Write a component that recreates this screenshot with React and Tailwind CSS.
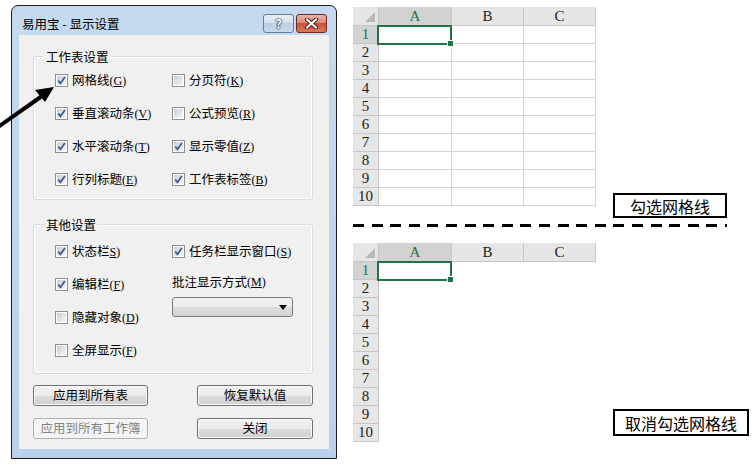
import React from "react";

function Check({ on }) {
  return (
    <span className="flex h-[13px] w-[13px] shrink-0 items-center justify-center border border-[#8e8f8f] bg-white">
      <span className="relative flex h-[9px] w-[9px] items-center justify-center bg-gradient-to-br from-[#c9ced6] to-[#f7f7f7]">
        {on && (
          <svg width="11" height="11" viewBox="0 0 11 11" className="absolute">
            <path d="M2.3 5.6 L4.5 8.3 L8.9 2" fill="none" stroke="#3e5897" strokeWidth="1.7" />
          </svg>
        )}
      </span>
    </span>
  );
}

function Key({ k, noParen }) {
  return (
    <span className="font-['Liberation_Serif',serif] text-[12px]">
      {noParen ? "" : "("}
      <span className="underline">{k}</span>)
    </span>
  );
}

function Opt({ on, label, k, noParen }) {
  return (
    <div className="flex h-[33px] items-center gap-[4px]">
      <Check on={on} />
      <span className="text-[12.5px] leading-none text-black whitespace-nowrap">
        {label}
        <Key k={k} noParen={noParen} />
      </span>
    </div>
  );
}

function Btn({ children, disabled, wide }) {
  const w = wide ? "w-[116px]" : "w-[115px]";
  const look = disabled
    ? "border-[#adb2b5] bg-[#f4f4f4] text-[#838383]"
    : "border-[#707070] bg-[linear-gradient(#f2f2f2_0%,#ebebeb_50%,#dddddd_50%,#cfcfcf_100%)] text-black shadow-[inset_0_0_0_1px_#fbfbfb]";
  return (
    <div className={`${w} ${look} flex h-[21px] items-center justify-center rounded-[3px] border text-[12.5px] leading-none`}>
      {children}
    </div>
  );
}

function Group({ title, children, h, mt, pt }) {
  return (
    <div className={`relative w-[280px] rounded-[3px] border border-[#d5dfe5] shadow-[inset_0_0_0_1px_#ffffff] ${h} ${mt} ${pt}`}>
      <span className="absolute -top-[8px] left-[10px] bg-[#f0f0f0] px-[2px] text-[12.5px] leading-[15px] text-black">
        {title}
      </span>
      {children}
    </div>
  );
}

function Dialog() {
  return (
    <div className="ml-[11px] mt-[5px] flex h-[454px] w-[326px] shrink-0 flex-col rounded-t-[7px] border border-[#1b1b1b] bg-gradient-to-b from-[#c6daef] to-[#b9d1ea] px-[7px] pb-[9px]">
      <div className="flex h-[29px] items-end justify-between pb-[2px]">
        <span className="mb-[1px] pl-[3px] text-[12.5px] leading-[17px] text-black">易用宝 - 显示设置</span>
        <div className="mr-[2px] flex gap-[2px]">
          <div className="flex h-[19px] w-[31px] items-center justify-center rounded-[3px] border border-[#6c7e96] bg-[linear-gradient(#e8eff7_0%,#d3e0ee_45%,#bccee3_50%,#c9d9ea_100%)] text-[13px] font-bold leading-none text-white [text-shadow:0_0_1px_#1e2e44,0_0_1px_#1e2e44,0_0_2px_#1e2e44]">
            ?
          </div>
          <div className="flex h-[19px] w-[31px] items-center justify-center rounded-[3px] border border-[#6e2a1f] bg-[linear-gradient(#eab3a7_0%,#dc8a78_45%,#c9533a_50%,#d47a5c_100%)]">
            <svg width="15" height="11" viewBox="0 0 15 11">
              <path d="M3 1.5 L12 9.5 M12 1.5 L3 9.5" stroke="#4b1a12" strokeWidth="4.2" strokeLinecap="round" />
              <path d="M3 1.5 L12 9.5 M12 1.5 L3 9.5" stroke="#ffffff" strokeWidth="2.2" strokeLinecap="round" />
            </svg>
          </div>
        </div>
      </div>
      <div className="flex flex-1 flex-col bg-[#f0f0f0] pl-[14px]">
        <Group title="工作表设置" h="h-[144px]" mt="mt-[21px]" pt="pt-[7px]">
          <div className="flex pl-[21px]">
            <div className="flex w-[117px] flex-col">
              <Opt on label="网格线" k="G" />
              <Opt on label="垂直滚动条" k="V" />
              <Opt on label="水平滚动条" k="T" />
              <Opt on label="行列标题" k="E" />
            </div>
            <div className="flex flex-col">
              <Opt label="分页符" k="K" />
              <Opt label="公式预览" k="R" />
              <Opt on label="显示零值" k="Z" />
              <Opt on label="工作表标签" k="B" />
            </div>
          </div>
        </Group>
        <Group title="其他设置" h="h-[150px]" mt="mt-[24px]" pt="pt-[10px]">
          <div className="flex pl-[21px]">
            <div className="flex w-[117px] flex-col">
              <Opt on label="状态栏" k="S" noParen />
              <Opt on label="编辑栏" k="F" />
              <Opt label="隐藏对象" k="D" />
              <Opt label="全屏显示" k="F" />
            </div>
            <div className="flex flex-col">
              <Opt on label="任务栏显示窗口" k="S" />
              <div className="flex h-[28px] items-center text-[12.5px] leading-none text-black">
                批注显示方式
                <Key k="M" />
              </div>
              <div className="mt-[1px] flex h-[20px] w-[121px] items-center justify-end rounded-[3px] border border-[#7a7a7a] bg-[linear-gradient(#f2f2f2_0%,#ebebeb_50%,#dddddd_50%,#d3d3d3_100%)] pr-[5px]">
                <svg width="8" height="5" viewBox="0 0 8 5">
                  <polygon points="0,0 8,0 4,5" fill="#000" />
                </svg>
              </div>
            </div>
          </div>
        </Group>
        <div className="mt-[11px] flex w-[280px] justify-between">
          <Btn>应用到所有表</Btn>
          <Btn wide>恢复默认值</Btn>
        </div>
        <div className="mt-[12px] flex w-[280px] justify-between">
          <Btn disabled>应用到所有工作簿</Btn>
          <Btn wide>关闭</Btn>
        </div>
      </div>
    </div>
  );
}

function Sheet({ lines }) {
  const rows = [1, 2, 3, 4, 5, 6, 7, 8, 9, 10];
  const cell = lines ? "border-r border-b border-[#d4d4d4]" : "";
  return (
    <div className="flex shrink-0 flex-col font-['Liberation_Serif',serif] text-[15px] leading-none text-[#222]">
      <div className="flex h-[19px]">
        <div className="relative w-[26px] border-r border-b border-[#c6c6c6] bg-[#e6e6e6]">
          <svg className="absolute bottom-[3px] right-[3px]" width="10" height="10" viewBox="0 0 10 10">
            <polygon points="10,0 10,10 0,10" fill="#b9b9b9" />
          </svg>
        </div>
        <div className="flex w-[73px] items-center justify-center border-r border-b border-[#c6c6c6] bg-[#d2d2d2] text-[#217346]">A</div>
        <div className="flex w-[72px] items-center justify-center border-r border-b border-[#c6c6c6] bg-[#e6e6e6]">B</div>
        <div className="flex w-[72px] items-center justify-center border-r border-b border-[#c6c6c6] bg-[#e6e6e6]">C</div>
      </div>
      {rows.map((r) => (
        <div key={r} className="flex h-[18px]">
          <div
            className={`flex w-[26px] items-center justify-center border-r border-b border-[#c6c6c6] ${
              r === 1 ? "bg-[#d2d2d2] text-[#217346]" : "bg-[#e6e6e6]"
            }`}
          >
            {r}
          </div>
          <div className={`relative w-[73px] ${cell}`}>
            {r === 1 && (
              <div className="absolute -left-[2px] -top-[1px] z-10 h-[20px] w-[75px] border-2 border-[#217346]">
                <div className="absolute -bottom-[4px] -right-[4px] h-[7px] w-[7px] border border-white bg-[#217346]" />
              </div>
            )}
          </div>
          <div className={`w-[72px] ${cell}`} />
          <div className={`w-[72px] ${cell}`} />
        </div>
      ))}
    </div>
  );
}

function Right() {
  return (
    <div className="ml-[16px] flex flex-col pt-[7px]">
      <div className="flex items-start">
        <Sheet lines />
        <div className="ml-[17px] mt-[186px] flex h-[25px] w-[114px] items-center justify-center border-2 border-black text-[16px] leading-none text-black">
          勾选网格线
        </div>
      </div>
      <div className="mt-[6px] h-[3px] w-[374px] bg-[repeating-linear-gradient(90deg,#000_0px,#000_11px,transparent_11px,transparent_18.6px)]" />
      <div className="mt-[16px] flex items-start">
        <Sheet />
        <div className="ml-[17px] mt-[166px] flex h-[27px] w-[136px] items-center justify-center border-2 border-black text-[16px] leading-none text-black">
          取消勾选网格线
        </div>
      </div>
    </div>
  );
}

export default function App() {
  return (
    <div className="relative flex h-[470px] w-[754px] overflow-hidden bg-white font-['Noto_Sans_CJK_SC',sans-serif]">
      <Dialog />
      <Right />
      <svg className="absolute left-0 top-[80px]" width="60" height="50" viewBox="0 0 60 50">
        <line x1="-2" y1="47" x2="42" y2="16" stroke="#000" strokeWidth="4" />
        <polygon points="54,7 45,22 35,10" fill="#000" />
      </svg>
    </div>
  );
}
